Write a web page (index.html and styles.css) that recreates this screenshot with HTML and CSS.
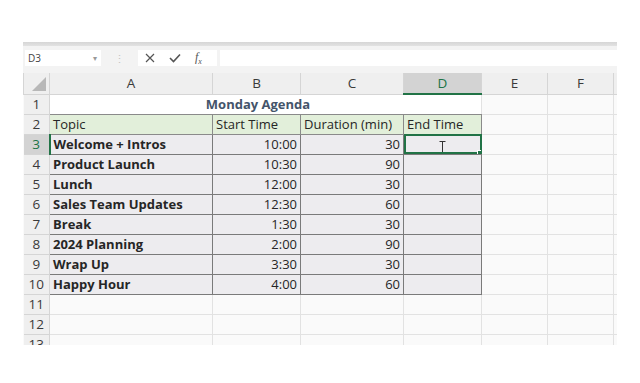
FILE: index.html
```html
<!DOCTYPE html>
<html lang="en">
<head>
    <meta charset="UTF-8">
    <title>Monday Agenda</title>
    <link rel="stylesheet" href="styles.css">
</head>
<body>
    <div class="sheet">
        <div class="topband"></div>

        <div class="formula-bar">
            <div class="namebox">D3<span class="arrow">&#9662;</span></div>
            <span class="dots">&#8942;</span>
            <div class="fx-buttons">
                <svg width="10" height="10" viewBox="0 0 10 10"><path d="M1 1 L9 9 M9 1 L1 9" stroke="#555" stroke-width="1.2" fill="none"/></svg>
                <svg width="12" height="10" viewBox="0 0 12 10"><path d="M1 5 L4.5 8.5 L11 1.5" stroke="#555" stroke-width="1.6" fill="none"/></svg>
                <span class="fx">f<sub>x</sub></span>
            </div>
            <div class="formula-input"></div>
        </div>

        <table class="grid">
            <colgroup>
                <col class="c-row">
                <col class="c-a">
                <col class="c-b">
                <col class="c-c">
                <col class="c-d">
                <col class="c-e">
                <col class="c-f">
                <col class="c-g">
            </colgroup>
            <thead>
                <tr>
                    <th class="corner"><span class="tri"></span></th>
                    <th>A</th>
                    <th>B</th>
                    <th>C</th>
                    <th class="active">D</th>
                    <th>E</th>
                    <th>F</th>
                    <th></th>
                </tr>
            </thead>
            <tbody>
                <tr>
                    <th class="rownum">1</th>
                    <td colspan="4" class="title">Monday Agenda</td>
                    <td></td><td></td><td></td>
                </tr>
                <tr>
                    <th class="rownum">2</th>
                    <td class="head">Topic</td>
                    <td class="head">Start Time</td>
                    <td class="head">Duration (min)</td>
                    <td class="head">End Time</td>
                    <td></td><td></td><td></td>
                </tr>
                <tr>
                    <th class="rownum active">3</th>
                    <td class="box topic">Welcome + Intros</td>
                    <td class="box num">10:00</td>
                    <td class="box num">30</td>
                    <td class="box selected">
                        <svg class="ibeam" width="7" height="12" viewBox="0 0 7 12"><path d="M0.5 0.5 H6.5 M3.5 0.5 V11.5 M0.5 11.5 H6.5" stroke="#333" stroke-width="1" fill="none"/></svg>
                    </td>
                    <td></td><td></td><td></td>
                </tr>
                <tr>
                    <th class="rownum">4</th>
                    <td class="box topic">Product Launch</td>
                    <td class="box num">10:30</td>
                    <td class="box num">90</td>
                    <td class="box"></td>
                    <td></td><td></td><td></td>
                </tr>
                <tr>
                    <th class="rownum">5</th>
                    <td class="box topic">Lunch</td>
                    <td class="box num">12:00</td>
                    <td class="box num">30</td>
                    <td class="box"></td>
                    <td></td><td></td><td></td>
                </tr>
                <tr>
                    <th class="rownum">6</th>
                    <td class="box topic">Sales Team Updates</td>
                    <td class="box num">12:30</td>
                    <td class="box num">60</td>
                    <td class="box"></td>
                    <td></td><td></td><td></td>
                </tr>
                <tr>
                    <th class="rownum">7</th>
                    <td class="box topic">Break</td>
                    <td class="box num">1:30</td>
                    <td class="box num">30</td>
                    <td class="box"></td>
                    <td></td><td></td><td></td>
                </tr>
                <tr>
                    <th class="rownum">8</th>
                    <td class="box topic">2024 Planning</td>
                    <td class="box num">2:00</td>
                    <td class="box num">90</td>
                    <td class="box"></td>
                    <td></td><td></td><td></td>
                </tr>
                <tr>
                    <th class="rownum">9</th>
                    <td class="box topic">Wrap Up</td>
                    <td class="box num">3:30</td>
                    <td class="box num">30</td>
                    <td class="box"></td>
                    <td></td><td></td><td></td>
                </tr>
                <tr>
                    <th class="rownum">10</th>
                    <td class="box topic">Happy Hour</td>
                    <td class="box num">4:00</td>
                    <td class="box num">60</td>
                    <td class="box"></td>
                    <td></td><td></td><td></td>
                </tr>
                <tr>
                    <th class="rownum">11</th>
                    <td></td><td></td><td></td><td></td><td></td><td></td><td></td>
                </tr>
                <tr>
                    <th class="rownum">12</th>
                    <td></td><td></td><td></td><td></td><td></td><td></td><td></td>
                </tr>
                <tr>
                    <th class="rownum">13</th>
                    <td></td><td></td><td></td><td></td><td></td><td></td><td></td>
                </tr>
            </tbody>
        </table>
    </div>
</body>
</html>
```

FILE: styles.css
```css
body {
    margin: 0;
    background-color: white;
    font-family: "Open Sans", "Noto Sans", sans-serif;
    color: #262626;
}
.sheet {
    margin: 42px 0 0 23px;
    width: 594px;
    height: 303px;
    overflow: hidden;
    background-color: #f3f3f3;
}
.topband {
    height: 4px;
    background: linear-gradient(#d6d6d6, #e2e2e2);
}
.formula-bar {
    display: flex;
    align-items: center;
    height: 16px;
    padding: 4px 0 7px 2px;
}
.namebox {
    width: 73px;
    height: 16px;
    padding: 0 0 0 3px;
    background-color: white;
    font-size: 10px;
    line-height: 16px;
    color: #444;
    display: flex;
    justify-content: space-between;
}
.arrow {
    font-size: 8px;
    color: #999;
    padding-right: 4px;
}
.dots {
    width: 24px;
    margin-left: 13px;
    font-size: 11px;
    color: #c4c4c4;
}
.fx-buttons {
    width: 79px;
    height: 16px;
    background-color: white;
    display: flex;
    align-items: center;
    gap: 14px;
    padding-left: 7px;
    box-sizing: border-box;
}
.fx {
    font-family: "Liberation Serif", serif;
    font-style: italic;
    font-size: 12px;
    color: #555;
}
.fx sub {
    font-size: 8px;
}
.formula-input {
    flex: 1;
    height: 16px;
    margin-left: 3px;
    background-color: white;
}

.grid {
    border-collapse: collapse;
    table-layout: fixed;
    width: 598px;
    background-color: #fafafa;
    font-size: 13px;
}
.c-row { width: 26px; }
.c-a { width: 163px; }
.c-b { width: 88px; }
.c-c { width: 103px; }
.c-d { width: 78px; }
.c-e { width: 66px; }
.c-f { width: 66px; }
.c-g { width: 8px; }

.grid tr {
    height: 20px;
}
.grid td {
    border: 1px solid #e2e2e2;
    padding: 0 3px;
    white-space: nowrap;
    overflow: hidden;
    line-height: 18px;
}
.grid thead th {
    background-color: #efefef;
    border: 1px solid #d5d5d5;
    border-top: none;
    font-weight: normal;
    font-size: 13.5px;
    color: #3a3a3a;
    height: 20px;
    padding: 0;
}
.grid thead th.active {
    background-color: #d3d3d3;
    border-bottom: 2px solid #217346;
    color: #217346;
}
.corner {
    position: relative;
}
.tri {
    position: absolute;
    right: 3px;
    bottom: 3px;
    width: 0;
    height: 0;
    border-left: 14px solid transparent;
    border-bottom: 14px solid #b8b8b8;
}
.rownum {
    background-color: #efefef;
    border: 1px solid #d5d5d5;
    border-left: none;
    font-weight: normal;
    font-size: 13.5px;
    color: #3a3a3a;
    padding: 0;
    text-align: center;
}
.rownum.active {
    background-color: #d3d3d3;
    border-right: 2px solid #217346;
    color: #217346;
}

.grid td.title {
    text-align: center;
    padding-right: 18px;
    font-weight: bold;
    color: #44546a;
    background-color: white;
    border-bottom-color: #8a8a8a;
}
.grid td.head {
    background-color: #e2efda;
    border-color: #8a8a8a;
}
.grid td.box {
    background-color: #edecef;
    border-color: #7a7a7a;
}
.topic {
    font-weight: bold;
}
.num {
    text-align: right;
}
.grid td.selected {
    position: relative;
    outline: 2px solid #217346;
    outline-offset: -2px;
    text-align: center;
}
.selected::after {
    content: "";
    position: absolute;
    right: -3px;
    bottom: -3px;
    width: 5px;
    height: 5px;
    background-color: #217346;
    border: 1px solid white;
}
.ibeam {
    vertical-align: middle;
    margin-top: 4px;
}
```
